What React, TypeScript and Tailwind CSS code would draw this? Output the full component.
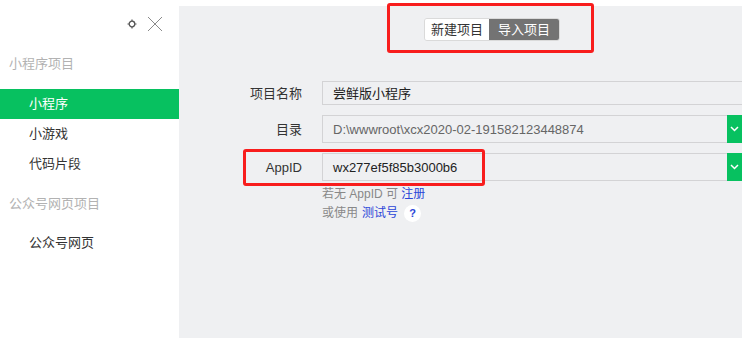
const font = { fontFamily: '"Liberation Sans", "Noto Sans CJK SC", sans-serif' };

const ChevronDown = () => (
  <svg width="9" height="6" viewBox="0 0 9 6" fill="none">
    <path d="M1 1l3.5 3.5L8 1" stroke="#ffffff" strokeWidth="1.5" />
  </svg>
);

const SideItem = ({ label, active = false }: { label: string; active?: boolean }) => (
  <div
    className={`h-[30px] flex items-center pl-[29px] text-[13px] ${
      active ? "bg-[#07c160] text-white" : "text-[#333]"
    }`}
  >
    {label}
  </div>
);

const SideHeader = ({ label }: { label: string }) => (
  <div className="h-[30px] flex items-center pl-[9px] text-[13px] text-[#b2b2b2]">{label}</div>
);

const FormRow = ({
  label,
  value,
  muted = false,
  select = false,
  tall = true,
}: {
  label: string;
  value: string;
  muted?: boolean;
  select?: boolean;
  tall?: boolean;
}) => (
  <div className="flex items-center">
    <div className="w-[123px] pr-[20px] text-right text-[13px] text-[#333]">{label}</div>
    <div
      className={`flex-1 flex items-center border-y border-l border-[#d3d3d5] ${
        tall ? "h-[28px]" : "h-[24px]"
      }`}
    >
      <div className={`flex-1 pl-[10px] text-[13px] ${muted ? "text-[#666]" : "text-[#222]"}`}>{value}</div>
      {select && (
        <div className="w-[15px] h-[28px] -my-px bg-[#07c160] flex items-center justify-center">
          <ChevronDown />
        </div>
      )}
    </div>
  </div>
);

export default function App() {
  return (
    <div className="w-[742px] h-[338px] bg-white flex overflow-hidden" style={font}>
      {/* sidebar */}
      <aside className="w-[179px] shrink-0 bg-white">
        <div className="h-[49px] flex items-center justify-end gap-[10px] pr-[16px] pb-[2px]">
          <svg width="10" height="10" viewBox="0 0 10 10" fill="none">
            <circle cx="5" cy="5" r="2.8" stroke="#555" strokeWidth="1.3" />
            <path d="M5 0.5v1.4M5 8.1v1.4M0.5 5h1.4M8.1 5h1.4" stroke="#555" strokeWidth="1.2" />
          </svg>
          <svg width="16" height="16" viewBox="0 0 16 16" fill="none">
            <path d="M1 1l14 14M15 1L1 15" stroke="#8a8a8a" strokeWidth="1" />
          </svg>
        </div>
        <SideHeader label="小程序项目" />
        <div className="mt-[10px]">
          <SideItem label="小程序" active />
          <SideItem label="小游戏" />
          <SideItem label="代码片段" />
        </div>
        <div className="mt-[10px]">
          <SideHeader label="公众号网页项目" />
        </div>
        <div className="mt-[9px]">
          <SideItem label="公众号网页" />
        </div>
      </aside>

      {/* main */}
      <main className="flex-1 mt-[6px] bg-[#eff0f2] relative">
        <div className="pt-[11px] pl-[245px]">
          <div className="inline-flex h-[23px] rounded-[3px] border border-[#dadada] overflow-hidden text-[13px]">
            <div className="w-[64px] bg-white text-[#333] flex items-center justify-center">新建项目</div>
            <div className="w-[70px] bg-[#737373] text-white flex items-center justify-center">导入项目</div>
          </div>
        </div>

        <div className="mt-[40px] pl-[20px] flex flex-col">
          <FormRow label="项目名称" value="尝鲜版小程序" tall={false} />
          <div className="mt-[10px]">
            <FormRow label="目录" value="D:\wwwroot\xcx2020-02-191582123448874" muted select />
          </div>
          <div className="mt-[10px]">
            <FormRow label="AppID" value="wx277ef5f85b3000b6" select />
          </div>
          <div className="pl-[123px] mt-[4px] text-[12px] leading-[19px] text-[#888]">
            <div>
              若无 AppID 可 <span className="text-[#2b45d8]">注册</span>
            </div>
            <div className="flex items-center">
              或使用 <span className="text-[#2b45d8] ml-[4px]">测试号</span>
              <span className="ml-[6px] w-[17px] h-[17px] rounded-full bg-white text-[#2b45d8] text-[11px] font-bold flex items-center justify-center">
                ?
              </span>
            </div>
          </div>
        </div>

        {/* annotation boxes */}
        <div className="absolute left-[208px] top-[-3px] w-[207px] h-[50px] border-[3px] border-[#f81d1d] rounded-[3px]" />
        <div className="absolute left-[64px] top-[143px] w-[242px] h-[37px] border-[3px] border-[#f81d1d] rounded-[3px]" />
      </main>
    </div>
  );
}
